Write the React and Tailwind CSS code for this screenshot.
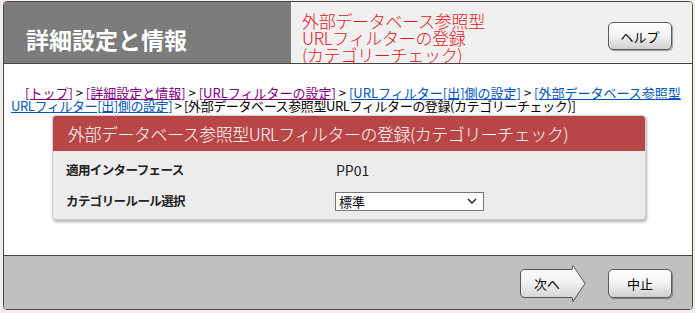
import React from "react";

const jp = { fontFamily: '"Noto Sans CJK JP", "Liberation Sans", sans-serif' };

function GrayButton({ label, className = "" }) {
  return (
    <button
      className={`flex items-center justify-center rounded-[5px] border border-[#5a5a5a] bg-gradient-to-b from-white via-[#f2f2f2] to-[#cfcfcf] text-[13px] leading-none text-black shadow-[1px_1px_1px_rgba(0,0,0,0.35)] ${className}`}
    >
      {label}
    </button>
  );
}

function NextButton() {
  return (
    <div className="relative h-[37px] w-[66px]">
      <svg width="66" height="37" viewBox="0 0 66 37" className="absolute left-0 top-0">
        <defs>
          <linearGradient id="nb" x1="0" y1="0" x2="0" y2="1">
            <stop offset="0" stopColor="#ffffff" />
            <stop offset="0.5" stopColor="#f0f0f0" />
            <stop offset="1" stopColor="#cccccc" />
          </linearGradient>
        </defs>
        <path
          d="M5,4.5 H52 L53,0.5 L65,18.5 L53,36.5 L52,32.5 H5 Q0.5,32.5 0.5,28 V9 Q0.5,4.5 5,4.5 Z"
          fill="url(#nb)"
          stroke="#555"
          strokeWidth="1"
        />
      </svg>
      <span className="absolute left-0 top-0 flex h-[37px] w-[54px] items-center justify-center text-[13px] leading-none text-black">
        次へ
      </span>
    </div>
  );
}

function Link({ children, visited }) {
  return (
    <a
      href="#"
      className={`underline ${visited ? "text-[#800080]" : "text-[#0055bb]"}`}
    >
      {children}
    </a>
  );
}

export default function App() {
  return (
    <div className="h-[313px] w-[695px] bg-[#f6ecec] pl-[3px] pt-[1px]" style={jp}>
      <div className="flex h-[309px] w-[690px] flex-col overflow-hidden rounded-[4px] border border-[#4a4a4a] bg-white">
        {/* header */}
        <div className="flex h-[61px] shrink-0">
          <div className="w-[287px] bg-[#7c7c7c] pl-[22px] pt-[22px] text-[23px] font-bold leading-[30px] text-white">
            詳細設定と情報
          </div>
          <div className="flex flex-1 overflow-hidden bg-[#f0f0f0]">
            <div className="flex-1 pl-[11px] pt-[10px] text-[17px] font-light leading-[17px] tracking-[-0.3px] text-[#e4141b]">
              外部データベース参照型
              <br />
              URLフィルターの登録
              <br />
              (カテゴリーチェック)
            </div>
            <GrayButton label="ヘルプ" className="mr-[20px] mt-[20px] h-[28px] w-[64px]" />
          </div>
        </div>
        <div className="h-px shrink-0 bg-[#444]" />

        {/* content */}
        <div className="h-[191px] shrink-0 bg-white">
          <div className="whitespace-nowrap pl-[7px] pt-[22px] text-[13px] leading-[13px] text-black">
            <div className="pl-[14px]">
              <Link visited>[トップ]</Link> &gt; <Link visited>[詳細設定と情報]</Link> &gt;{" "}
              <Link visited>[URLフィルターの設定]</Link> &gt; <Link>[URLフィルター[出]側の設定]</Link> &gt;{" "}
              <Link>[外部データベース参照型</Link>
            </div>
            <div className="tracking-[-0.4px]">
              <Link>URLフィルター[出]側の設定]</Link> &gt; [外部データベース参照型URLフィルターの登録(カテゴリーチェック)]
            </div>
          </div>

          <div className="ml-[48px] mt-[3px] w-[594px] overflow-hidden rounded-[4px] border border-[#cfcfcf] bg-[#ececec] shadow-[1px_2px_3px_rgba(0,0,0,0.3)]">
            <div className="h-[35px] bg-[#b84646] pl-[15px] pt-[6px] text-[17px] font-light leading-[24px] tracking-[-0.5px] text-white">
              外部データベース参照型URLフィルターの登録(カテゴリーチェック)
            </div>
            <div className="px-[13px] pb-[7px] pt-[8px] text-[13px]">
              <div className="flex h-[22px] items-center">
                <div className="w-[270px] text-[12.5px] font-bold tracking-[-0.6px] text-[#222]">適用インターフェース</div>
                <div className="text-[14px] text-[#222]">PP01</div>
              </div>
              <div className="mt-[9px] flex h-[22px] items-center">
                <div className="w-[269px] text-[12.5px] font-bold tracking-[-0.6px] text-[#222]">カテゴリールール選択</div>
                <div className="flex h-[19px] w-[149px] items-center justify-between border border-[#777] bg-white pl-[3px] pr-[6px] text-[13px] leading-none text-black">
                  <span>標準</span>
                  <svg width="10" height="6" viewBox="0 0 10 6">
                    <path d="M1,1 L5,5 L9,1" fill="none" stroke="#222" strokeWidth="1.4" />
                  </svg>
                </div>
              </div>
            </div>
          </div>
        </div>
        <div className="h-px shrink-0 bg-[#444]" />

        {/* footer */}
        <div className="flex flex-1 items-center justify-end bg-[#c0c0c0] pr-[20px] pt-[1px]">
          <NextButton />
          <GrayButton label="中止" className="ml-[22px] mt-[1px] h-[29px] w-[64px]" />
        </div>
      </div>
    </div>
  );
}
